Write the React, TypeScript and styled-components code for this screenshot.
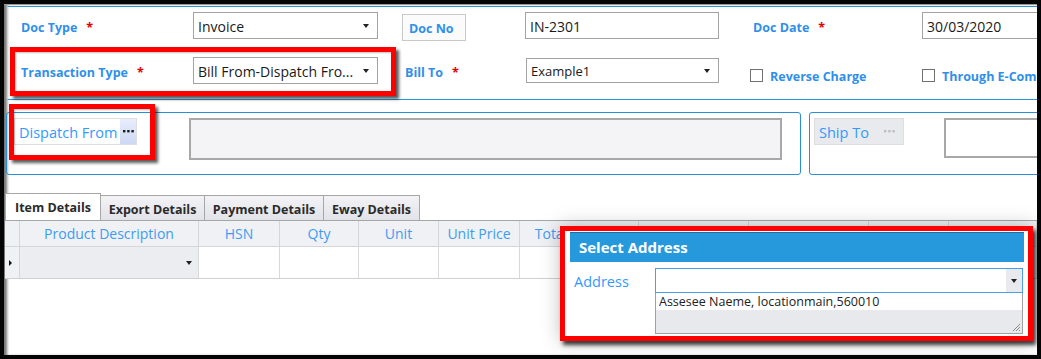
import React from 'react';
import styled, { createGlobalStyle } from 'styled-components';

const Global = createGlobalStyle`
  html, body { margin: 0; padding: 0; background: #050505; }
  body {
    width: 1041px;
    height: 359px;
    overflow: hidden;
    font-family: "Open Sans", "Noto Sans", sans-serif;
  }
  * { box-sizing: border-box; }
`;

const BLUE = '#2f8fea';
const LINK = '#3399ff';

const Window = styled.div`
  position: relative;
  margin: 4px 4px 0 4px;
  height: 351px;
  background: #fff;
  border-top: 1px solid #9a9a9a;
  box-shadow: inset 4px 0 3px -1px rgba(0, 0, 0, 0.55);
  overflow: hidden;
`;

const HeaderPanel = styled.div`
  margin: 1px 0 0 3px;
  border-top: 1px solid #2a97dc;
  border-bottom: 1px solid #2a97dc;
  border-left: 1px solid #b5d8f2;
  padding: 5px 0 15px 13px;
  display: grid;
  grid-template-columns: 172px 185px 24px 123px 194px 31px 172px 1fr;
  grid-template-rows: 27px 27px;
  row-gap: 18px;
  align-items: center;
`;

const Label = styled.div<{ $indent?: number }>`
  font-weight: 700;
  font-size: 12.5px;
  color: ${BLUE};
  padding: 3px 0 0 ${(p) => p.$indent ?? 0}px;
  white-space: nowrap;
`;

const Req = styled.span`
  color: #e00000;
  margin-left: 9px;
`;

const BoxLabel = styled.div`
  align-self: start;
  margin-top: 2px;
  width: 64px;
  height: 27px;
  border: 1px solid #c9c9c9;
  background: #fbfbfb;
  padding: 2px 0 0 6px;
  display: flex;
  align-items: center;
  font-weight: 700;
  font-size: 12.5px;
  color: ${BLUE};
`;

const Select = styled.div<{ $small?: boolean }>`
  height: ${(p) => (p.$small ? 25 : 27)}px;
  margin-left: ${(p) => (p.$small ? 1 : 0)}px;
  border: 1px solid #a3a3a3;
  background: #fff;
  display: flex;
  align-items: center;
  padding: 1px 8px 0 4px;
  font-size: ${(p) => (p.$small ? 13 : 14)}px;
  color: #1a1a1a;
`;

const SelectText = styled.span`
  flex: 1;
  white-space: nowrap;
  overflow: hidden;
`;

const Caret = styled.span`
  width: 0;
  height: 0;
  border-left: 3.5px solid transparent;
  border-right: 3.5px solid transparent;
  border-top: 4px solid #222;
`;

const TextInput = styled.div`
  height: 27px;
  border: 1px solid #a3a3a3;
  background: #fff;
  display: flex;
  align-items: center;
  padding: 1px 0 0 4px;
  font-size: 14px;
  color: #1a1a1a;
  white-space: nowrap;
`;

const CheckRow = styled.div`
  align-self: start;
  margin-top: 12px;
  display: flex;
  align-items: center;
  height: 13px;
  white-space: nowrap;
`;

const CheckBox = styled.span`
  width: 13px;
  height: 13px;
  border: 1px solid #707070;
  background: #fff;
  margin: 0 7px 0 0;
  flex: none;
`;

const CheckText = styled.span`
  font-weight: 700;
  font-size: 12.5px;
  color: ${BLUE};
  padding-top: 1px;
`;

const AddressRow = styled.div`
  display: flex;
  gap: 8px;
  margin: 12px 0 0 2px;
  height: 63px;
`;

const GroupBox = styled.div<{ $width: number }>`
  flex: none;
  width: ${(p) => p.$width}px;
  border: 1px solid #2a8fd6;
  border-radius: 3px;
  display: flex;
  align-items: flex-start;
  padding: 5px 0 0 ${(p) => (p.$width > 500 ? 7 : 4)}px;
`;

const LookupLabel = styled.div<{ $disabled?: boolean; $width: number }>`
  width: ${(p) => p.$width}px;
  height: 27px;
  border: 1px solid #dedede;
  background: ${(p) => (p.$disabled ? '#e9eaee' : '#fff')};
  display: flex;
  align-items: center;
  padding-left: 2px;
  flex: none;
`;

const LookupText = styled.span`
  flex: 1;
  font-size: 14.5px;
  color: ${LINK};
  white-space: nowrap;
  padding: 2px 0 0 2px;
`;

const LookupButton = styled.span<{ $disabled?: boolean }>`
  width: 16px;
  height: 25px;
  margin-right: ${(p) => (p.$disabled ? 6 : 0)}px;
  display: flex;
  align-items: center;
  justify-content: center;
  background: ${(p) => (p.$disabled ? 'transparent' : 'linear-gradient(#e8eefc, #cdd8f5)')};
`;

const AddressBox = styled.div<{ $disabled?: boolean; $offset: number; $width: number }>`
  flex: none;
  margin-left: ${(p) => p.$offset}px;
  width: ${(p) => p.$width}px;
  height: ${(p) => (p.$disabled ? 42 : 40)}px;
  border: 2px solid #a8a8a8;
  background: ${(p) => (p.$disabled ? '#f4f4f6' : '#fff')};
`;

const TabStrip = styled.div`
  display: flex;
  align-items: flex-end;
  margin: 18px 0 0 1px;
  height: 27px;
`;

const Tab = styled.div<{ $active?: boolean; $width: number }>`
  width: ${(p) => p.$width}px;
  height: ${(p) => (p.$active ? 27 : 25)}px;
  border: 1px solid #a6a6a6;
  border-bottom: none;
  margin-left: ${(p) => (p.$active ? 0 : -1)}px;
  background: ${(p) => (p.$active ? '#fff' : 'linear-gradient(#f3f3f6, #e2e3e8)')};
  display: flex;
  align-items: center;
  justify-content: center;
  font-weight: 700;
  font-size: 12.5px;
  color: #2b2b2b;
  white-space: nowrap;
  padding-top: ${(p) => (p.$active ? 1 : 2)}px;
`;

const DataGrid = styled.div`
  margin-left: 1px;
  display: grid;
  grid-template-columns: 15px 179px 81px 79px 80px 81px 119px 110px 120px 80px 1fr;
  grid-template-rows: 26px 32px;
  border-top: 1px solid #a6a6a6;
`;

const HeadCell = styled.div`
  background: #f0f1f4;
  border-right: 1px solid #d5d6da;
  border-bottom: 1px solid #d5d6da;
  display: flex;
  align-items: center;
  justify-content: center;
  font-size: 14px;
  color: #3d9cf2;
  white-space: nowrap;
  overflow: hidden;
`;

const Cell = styled.div<{ $shaded?: boolean }>`
  background: ${(p) => (p.$shaded ? '#ecedf0' : '#fff')};
  border-right: 1px solid #d8d8dc;
  border-bottom: 1px solid #d0d0d4;
  display: flex;
  align-items: center;
  justify-content: flex-end;
  padding-right: 6px;
`;

const RowMarker = styled.div`
  background: #f0f1f4;
  border-right: 1px solid #d5d6da;
  border-bottom: 1px solid #d0d0d4;
  display: flex;
  align-items: center;
  padding-left: 4px;
  &::before {
    content: '';
    border-top: 3.5px solid transparent;
    border-bottom: 3.5px solid transparent;
    border-left: 3.5px solid #111;
  }
`;

const Annotation = styled.div<{ $x: number; $y: number; $w: number; $h: number }>`
  position: absolute;
  left: ${(p) => p.$x}px;
  top: ${(p) => p.$y}px;
  width: ${(p) => p.$w}px;
  height: ${(p) => p.$h}px;
  border: 5px solid #ff0000;
  box-shadow: 3px 3px 3px rgba(0, 0, 0, 0.65), inset 1px 1px 2px rgba(0, 0, 0, 0.25);
  pointer-events: none;
`;

const PopupFrame = styled.div`
  position: absolute;
  left: 556px;
  top: 221px;
  width: 473px;
  height: 115px;
  border: 5px solid #ff0000;
  background: #fff;
  box-shadow: 3px 4px 4px rgba(0, 0, 0, 0.75), 0 0 18px rgba(0, 0, 0, 0.25);
  padding: 1px 4px 0 5px;
  display: flex;
  flex-direction: column;
`;

const PopupTitle = styled.div`
  height: 30px;
  flex: none;
  background: #2699dc;
  border-top: 1px solid #1d6fa3;
  color: #fff;
  font-weight: 700;
  font-size: 15px;
  display: flex;
  align-items: center;
  padding: 0 0 1px 9px;
`;

const PopupBody = styled.div`
  display: flex;
  align-items: flex-start;
  padding: 6px 0 0 4px;
`;

const PopupLabel = styled.div`
  width: 81px;
  height: 25px;
  display: flex;
  align-items: center;
  font-size: 14.5px;
  color: ${LINK};
  padding-top: 2px;
`;

const Combo = styled.div`
  width: 368px;
  display: flex;
  flex-direction: column;
`;

const ComboInput = styled.div`
  height: 25px;
  border: 1px solid #4a9fe8;
  background: #fff;
  display: flex;
  justify-content: flex-end;
`;

const ComboButton = styled.span`
  width: 16px;
  background: #e9eaee;
  display: flex;
  align-items: center;
  justify-content: center;
`;

const DropList = styled.div`
  position: relative;
  height: 41px;
  border: 1px solid #a0a0a0;
  border-top: none;
  background: #e8e9ec;
`;

const DropItem = styled.div`
  height: 17px;
  background: #fff;
  font-size: 12.5px;
  color: #222;
  padding-left: 3px;
  display: flex;
  align-items: center;
  white-space: nowrap;
`;

const Grip = styled.svg`
  position: absolute;
  right: 1px;
  bottom: 1px;
`;

function Ellipsis({ color }: { color: string }) {
  return (
    <svg width="11" height="3" viewBox="0 0 11 3">
      <rect x="0" y="0" width="2.4" height="2.4" fill={color} />
      <rect x="4.2" y="0" width="2.4" height="2.4" fill={color} />
      <rect x="8.4" y="0" width="2.4" height="2.4" fill={color} />
    </svg>
  );
}

const columns = ['Product Description', 'HSN', 'Qty', 'Unit', 'Unit Price', 'Total Amount', '', '', '', ''];

export default function App() {
  return (
    <>
      <Global />
      <Window>
        <HeaderPanel>
          <Label>
            Doc Type<Req>*</Req>
          </Label>
          <Select>
            <SelectText>Invoice</SelectText>
            <Caret />
          </Select>
          <span />
          <BoxLabel>Doc No</BoxLabel>
          <TextInput>IN-2301</TextInput>
          <span />
          <Label $indent={3}>
            Doc Date<Req>*</Req>
          </Label>
          <TextInput>30/03/2020</TextInput>

          <Label>
            Transaction Type<Req>*</Req>
          </Label>
          <Select>
            <SelectText>Bill From-Dispatch Fro...</SelectText>
            <Caret />
          </Select>
          <span />
          <Label $indent={3}>
            Bill To<Req>*</Req>
          </Label>
          <Select $small>
            <SelectText>Example1</SelectText>
            <Caret />
          </Select>
          <span />
          <CheckRow>
            <CheckBox />
            <CheckText>Reverse Charge</CheckText>
          </CheckRow>
          <CheckRow>
            <CheckBox />
            <CheckText>Through E-Commerce</CheckText>
          </CheckRow>
        </HeaderPanel>

        <AddressRow>
          <GroupBox $width={795}>
            <LookupLabel $width={123}>
              <LookupText>Dispatch From</LookupText>
              <LookupButton>
                <Ellipsis color="#1b1b1b" />
              </LookupButton>
            </LookupLabel>
            <AddressBox $disabled $offset={52} $width={593} />
          </GroupBox>
          <GroupBox $width={300}>
            <LookupLabel $disabled $width={90}>
              <LookupText>Ship To</LookupText>
              <LookupButton $disabled>
                <Ellipsis color="#bdbdbd" />
              </LookupButton>
            </LookupLabel>
            <AddressBox $offset={40} $width={120} />
          </GroupBox>
        </AddressRow>

        <TabStrip>
          <Tab $active $width={96}>Item Details</Tab>
          <Tab $width={105}>Export Details</Tab>
          <Tab $width={120}>Payment Details</Tab>
          <Tab $width={97}>Eway Details</Tab>
        </TabStrip>

        <DataGrid>
          <HeadCell />
          {columns.map((c, i) => (
            <HeadCell key={'h' + i}>{c}</HeadCell>
          ))}
          <RowMarker />
          <Cell $shaded>
            <Caret />
          </Cell>
          {columns.slice(1).map((_, i) => (
            <Cell key={'c' + i} />
          ))}
        </DataGrid>

        <Annotation $x={6} $y={42} $w={386} $h={49} />
        <Annotation $x={5} $y={99} $w={146} $h={56} />

        <PopupFrame>
          <PopupTitle>Select Address</PopupTitle>
          <PopupBody>
            <PopupLabel>Address</PopupLabel>
            <Combo>
              <ComboInput>
                <ComboButton>
                  <Caret />
                </ComboButton>
              </ComboInput>
              <DropList>
                <DropItem>Assesee Naeme, locationmain,560010</DropItem>
                <Grip width="10" height="10" viewBox="0 0 10 10">
                  <path d="M9 2 L2 9 M9 5 L5 9 M9 8 L8 9" stroke="#8a8a8a" strokeWidth="1" />
                </Grip>
              </DropList>
            </Combo>
          </PopupBody>
        </PopupFrame>
      </Window>
    </>
  );
}
